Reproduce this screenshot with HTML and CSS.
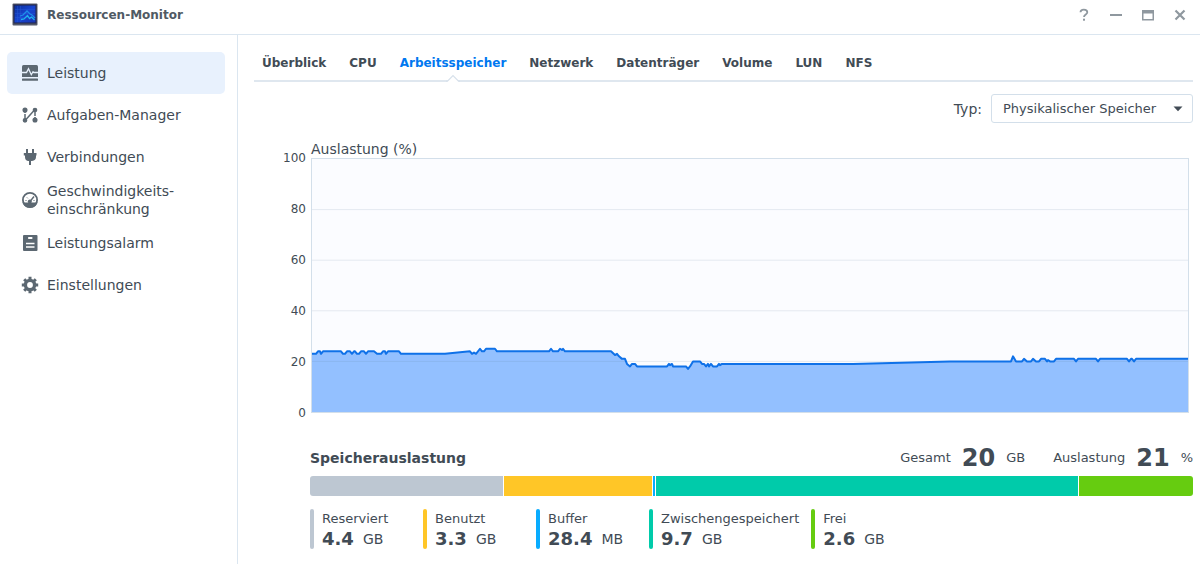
FILE: index.html
```html
<!DOCTYPE html>
<html lang="de">
<head>
<meta charset="utf-8">
<title>Ressourcen-Monitor</title>
<link rel="stylesheet" href="styles.css">
</head>
<body>
<div class="window">
  <header class="titlebar">
    <svg class="app-icon" viewBox="0 0 26 23" aria-hidden="true">
      <defs>
        <linearGradient id="screen" x1="0" y1="0" x2="1" y2="1">
          <stop offset="0" stop-color="#0b2f9c"/><stop offset="0.5" stop-color="#1745d0"/><stop offset="1" stop-color="#1a35b0"/>
        </linearGradient>
      </defs>
      <rect x="0.5" y="0.5" width="25" height="22" rx="1" fill="#54586a"/>
      <rect x="1.5" y="1.5" width="23" height="19" fill="#23264a"/>
      <rect x="2.5" y="2.5" width="21" height="17" fill="url(#screen)"/>
      <path d="M5.500 3v16M8.500 3v16M3 6.500h20M3 10.500h20M3 14.500h20" stroke="#2c62dc" stroke-width="0.500" opacity="0.700"/>
      <path d="M8 13l3-1 4-4 3 3 2 1 3 3" fill="none" stroke="#1f8de8" stroke-width="1.300"/>
      <path d="M9 16.500l3-.500 3.500-3.500 2 3 2-1.500 3 3" fill="none" stroke="#20b4ee" stroke-width="1.300"/>
    </svg>
    <h1 class="app-title">Ressourcen-Monitor</h1>
    <div class="window-controls">
      <button class="control" aria-label="Hilfe"><svg viewBox="0 0 14 14"><path d="M3.500 4.300C3.500 2.500 4.900 1.600 6.800 1.600s3.500 1 3.500 2.700c0 2.200-3.300 2.200-3.300 4.700" fill="none" stroke="#8f989f" stroke-width="1.800"/><rect x="6" y="10.700" width="2" height="2" fill="#8f989f"/></svg></button>
      <button class="control" aria-label="Minimieren"><svg viewBox="0 0 14 14"><rect x="1" y="6" width="12" height="2" fill="#8f989f"/></svg></button>
      <button class="control" aria-label="Maximieren"><svg viewBox="0 0 14 14"><path d="M1 2h12v10.500H1zM2.500 5.500v5.500h9v-5.500z" fill="#8f989f" fill-rule="evenodd"/></svg></button>
      <button class="control" aria-label="Schließen"><svg viewBox="0 0 14 14"><path d="M2.500 2.500l9 9M11.500 2.500l-9 9" stroke="#8f989f" stroke-width="2.200"/></svg></button>
    </div>
  </header>

  <div class="body">
    <nav class="sidebar" aria-label="Bereiche">
      <a class="nav-item nav-active" href="#leistung">
        <svg viewBox="0 0 18 18"><path d="M1 2.500Q1 1 2.500 1h13Q17 1 17 2.500V13H1z" fill="#5c6872"/><path d="M1 8.500h4.500l2-3.800 2.800 6 1.700-3 .8.800H17" fill="none" stroke="#e8f1fd" stroke-width="1.300"/><rect x="1" y="14.500" width="16" height="2.200" rx="0.500" fill="#5c6872"/></svg>
        <span>Leistung</span></a>
      <a class="nav-item" href="#aufgaben">
        <svg viewBox="0 0 18 18"><g fill="#5c6872" stroke="#5c6872" stroke-width="1.500"><path d="M4 4v10M14 4v10M4.500 14L13.500 4" fill="none"/><circle cx="4" cy="4" r="1.800"/><circle cx="4" cy="14.300" r="1.600"/><circle cx="14" cy="4" r="1.600"/><circle cx="14" cy="14" r="1.800"/></g><path d="M2 7.500h4M12 10.500h4" stroke="#fff"/></svg>
        <span>Aufgaben-Manager</span></a>
      <a class="nav-item" href="#verbindungen">
        <svg viewBox="0 0 18 18"><path d="M5 1h2v4h4V1h2v4h2.500v2.500H15V9q0 3.500-4 4h-1v4H8v-4H7q-3-.500-3-4V7.500H2.800V5H5z" fill="#5c6872"/></svg>
        <span>Verbindungen</span></a>
      <a class="nav-item" href="#geschwindigkeit">
        <svg viewBox="0 0 18 18"><circle cx="9" cy="9" r="7.100" fill="none" stroke="#5c6872" stroke-width="1.800"/><path d="M1.500 11.500h15A8 8 0 0 1 1.500 11.500z" fill="#5c6872"/><path d="M9 10.500l4-5" stroke="#5c6872" stroke-width="1.400"/><circle cx="8.800" cy="10.600" r="2" fill="#5c6872"/><path d="M4.500 9.500h1M6 6.500l.8.800M12.500 9.500h1" stroke="#5c6872"/></svg>
        <span>Geschwindigkeits-<br>einschränkung</span></a>
      <a class="nav-item" href="#alarm">
        <svg viewBox="0 0 18 18"><rect x="2" y="1" width="14.500" height="16" rx="1" fill="#5c6872"/><rect x="7" y="3" width="4.500" height="2" rx="0.800" fill="#fff"/><path d="M5 9.500h8.500M5 13h8.500" stroke="#fff" stroke-width="1.300"/></svg>
        <span>Leistungsalarm</span></a>
      <a class="nav-item" href="#einstellungen">
        <svg viewBox="0 0 18 18"><g fill="none" stroke="#5c6872"><circle cx="9" cy="9" r="4.600" stroke-width="3.400"/><path d="M9 .8v3M9 14.200v3M.8 9h3M14.200 9h3M3.200 3.200l2 2M12.800 12.800l2 2M3.200 14.800l2-2M12.800 5.200l2-2" stroke-width="3"/></g></svg>
        <span>Einstellungen</span></a>
    </nav>

    <main class="content">
      <nav class="tabs" aria-label="Leistung">
        <a class="tab" href="#ueberblick">Überblick</a>
        <a class="tab" href="#cpu">CPU</a>
        <a class="tab tab-active" href="#speicher" aria-current="page">Arbeitsspeicher<svg class="tab-notch" viewBox="0 0 14 8" aria-hidden="true"><path d="M1 8L7 1.500 13 8z" fill="#fff"/><path d="M0 7.200h1.500L7 1.500l5.500 5.700H14" fill="none" stroke="#d7e1eb" stroke-width="1.200"/></svg></a>
        <a class="tab" href="#netzwerk">Netzwerk</a>
        <a class="tab" href="#datentraeger">Datenträger</a>
        <a class="tab" href="#volume">Volume</a>
        <a class="tab" href="#lun">LUN</a>
        <a class="tab" href="#nfs">NFS</a>
      </nav>

      <div class="filter">
        <label for="typ">Typ:</label>
        <div class="select-wrap">
          <select id="typ" class="select"><option>Physikalischer Speicher</option></select>
          <svg class="select-arrow" viewBox="0 0 10 6" aria-hidden="true"><path d="M0.500 0.500h9L5 5.300z" fill="#414b55"/></svg>
        </div>
      </div>

      <section class="chart">
        <h2 class="chart-title">Auslastung (%)</h2>
        <div class="axis"><span>100</span><span>80</span><span>60</span><span>40</span><span>20</span><span>0</span></div>
        <svg class="plot" viewBox="312 0 876 100" preserveAspectRatio="none" role="img" aria-label="Auslastung (%)">
          <g transform="translate(0 100) scale(1 -1)">
            <polygon class="area" points="312,0 312,23 316,23 318,24 320,24 321,23 323,24 341,24 343,23 345,23 347,24 350,24 352,23 354,24 355,24 357,23 359,23 361,24 364,24 366,23 368,24 374,24 377,23 381,23 383,24 385,24 386,23 388,24 399,24 401,23 445,23 470,24 472,23 474,23.500 476,23 480,25 482,24 484,24 486,25 495,25 497,24 549,24 551,25 553,24 558,24 560,25 562,24.500 563,25 565,24 611,24 615,22.500 617,23 619,22 622,21 625,21 627,19 630,18 632,19 635,19 637,18 667,18 669,19 670,18.500 672,19 673,18 686,18 688,17 690,18 693,20 700,20 702,19 704,19 706,18 708,19 709,18 711,19 713,18 717,18 719,19 720,18.500 722,19 853,19 950,20 1011,20 1013,22 1016,20 1022,20 1024,21 1027,20 1031,20 1033,21 1036,20 1039,20 1041,21 1045,21 1047,20 1048,20.500 1050,20 1054,20 1056,21 1074,21 1076,20 1078,21 1096,21 1098,20 1100,21 1127,21 1129,20 1131,21 1132,21 1134,20 1136,21 1188,21 1188,0"/>
            <path class="gridline" d="M312 20H1188M312 40H1188M312 60H1188M312 80H1188"/>
            <polyline class="line" points="312,23 316,23 318,24 320,24 321,23 323,24 341,24 343,23 345,23 347,24 350,24 352,23 354,24 355,24 357,23 359,23 361,24 364,24 366,23 368,24 374,24 377,23 381,23 383,24 385,24 386,23 388,24 399,24 401,23 445,23 470,24 472,23 474,23.500 476,23 480,25 482,24 484,24 486,25 495,25 497,24 549,24 551,25 553,24 558,24 560,25 562,24.500 563,25 565,24 611,24 615,22.500 617,23 619,22 622,21 625,21 627,19 630,18 632,19 635,19 637,18 667,18 669,19 670,18.500 672,19 673,18 686,18 688,17 690,18 693,20 700,20 702,19 704,19 706,18 708,19 709,18 711,19 713,18 717,18 719,19 720,18.500 722,19 853,19 950,20 1011,20 1013,22 1016,20 1022,20 1024,21 1027,20 1031,20 1033,21 1036,20 1039,20 1041,21 1045,21 1047,20 1048,20.500 1050,20 1054,20 1056,21 1074,21 1076,20 1078,21 1096,21 1098,20 1100,21 1127,21 1129,20 1131,21 1132,21 1134,20 1136,21 1188,21"/>
          </g>
        </svg>
      </section>

      <section class="summary">
        <div class="summary-head">
          <h2 class="summary-title">Speicherauslastung</h2>
          <div class="total"><span>Gesamt</span><strong>20</strong><span>GB</span></div>
          <div class="total"><span>Auslastung</span><strong>21</strong><span>%</span></div>
        </div>
        <div class="stack">
          <div class="segment reserved" style="flex-grow:193"></div>
          <div class="segment used" style="flex-grow:148"></div>
          <div class="segment buffer" style="flex-grow:2"></div>
          <div class="segment cached" style="flex-grow:423"></div>
          <div class="segment free" style="flex-grow:114"></div>
        </div>
        <ul class="legend">
          <li class="legend-item"><i class="mark reserved"></i><div>Reserviert<p class="value"><strong>4.4</strong><span>GB</span></p></div></li>
          <li class="legend-item"><i class="mark used"></i><div>Benutzt<p class="value"><strong>3.3</strong><span>GB</span></p></div></li>
          <li class="legend-item"><i class="mark buffer"></i><div>Buffer<p class="value"><strong>28.4</strong><span>MB</span></p></div></li>
          <li class="legend-item"><i class="mark cached"></i><div>Zwischengespeichert<p class="value"><strong>9.7</strong><span>GB</span></p></div></li>
          <li class="legend-item"><i class="mark free"></i><div>Frei<p class="value"><strong>2.6</strong><span>GB</span></p></div></li>
        </ul>
      </section>
    </main>
  </div>
</div>
</body>
</html>
```

FILE: styles.css
```css
* { box-sizing: border-box; }
body {
  margin: 0;
  background: #fff;
  color: #414b55;
  font: 13px/18px Verdana, "DejaVu Sans", sans-serif;
}
h1, h2, p, ul { margin: 0; padding: 0; }
a { color: inherit; text-decoration: none; }

.window { display: flex; flex-direction: column; min-height: 100vh; }

.titlebar {
  display: flex;
  align-items: center;
  height: 35px;
  padding: 0 13px 5px 12px;
  border-bottom: 1px solid #dbe6f0;
}
.app-icon { width: 26px; height: 23px; margin-right: 9px; }
.app-title { color: #505a64; font-size: 12px; line-height: 18px; }
.window-controls { display: flex; gap: 18px; margin-left: auto; }
.control {
  width: 14px;
  height: 14px;
  padding: 0;
  border: 0;
  background: none;
}
.control svg { display: block; }

.body { display: flex; flex: 1; }
.sidebar {
  flex: none;
  width: 238px;
  padding: 17px 12px 0 7px;
  border-right: 1px solid #dbe6f0;
}
.nav-item {
  display: flex;
  align-items: center;
  gap: 8px;
  min-height: 42px;
  padding: 4px 14px;
  border-radius: 5px;
  font-size: 14px;
}
.nav-item svg { flex: none; width: 18px; height: 18px; }
.nav-active { background: #e8f1fd; }

.content { flex: 1; min-width: 0; padding: 0 7px 0 16px; }

.tabs {
  display: flex;
  gap: 23px;
  height: 47px;
  padding: 19px 8px 0;
  border-bottom: 2px solid #dfe7ef;
  font-size: 12px;
  font-weight: bold;
}
.tab { position: relative; }
.tab-active { color: #0078f0; }
.tab-notch {
  position: absolute;
  left: 50%;
  bottom: -2px;
  width: 14px;
  height: 8px;
  margin-left: -7px;
}

.filter {
  display: flex;
  justify-content: flex-end;
  align-items: center;
  gap: 9px;
  padding: 12px 0 0;
}
.filter label { font-size: 14px; }
.select-wrap { position: relative; }
.select {
  display: block;
  width: 202px;
  height: 29px;
  padding: 0 11px;
  border: 1px solid #d3dfea;
  border-radius: 3px;
  background: #fff;
  color: inherit;
  font: inherit;
  appearance: none;
}
.select-arrow { position: absolute; top: 12px; right: 10px; width: 10px; height: 6px; pointer-events: none; }

.chart {
  display: grid;
  grid-template-columns: 52px 1fr;
  column-gap: 5px;
  padding: 17px 4px 0 0;
}
.chart-title { grid-column: 2; font-size: 14px; font-weight: normal; line-height: 18px; }
.axis {
  display: flex;
  flex-direction: column;
  justify-content: space-between;
  margin: -8px 0;
  font-size: 12px;
  line-height: 16px;
  text-align: right;
}
.plot {
  display: block;
  width: 100%;
  height: 255px;
  border: 1px solid #d3dfea;
  background: #fbfcff;
}
.plot * { vector-effect: non-scaling-stroke; }
.area { fill: #93c0ff; }
.line { fill: none; stroke: #0f71e8; stroke-width: 2px; stroke-linejoin: round; }
.gridline { stroke: #5a7896; stroke-opacity: 0.14; stroke-width: 1px; }

.summary { padding: 31px 0 12px 56px; }
.summary-head { display: flex; align-items: center; height: 28px; margin-bottom: 4px; }
.summary-title { margin-right: auto; font-size: 14px; }
.total { display: flex; align-items: center; gap: 11px; margin-left: 28px; font-size: 13px; }
.total strong { font-size: 24px; }

.stack { display: flex; gap: 1px; height: 20px; overflow: hidden; border-radius: 3px; }
.segment { flex: 1 1 0; }
.reserved { background: #bdc7d2; }
.used { background: #ffc627; }
.buffer { background: #08acff; }
.cached { background: #00cbaa; }
.free { background: #66cc10; }

.legend { display: flex; gap: 12px; margin-top: 13px; list-style: none; }
.legend-item { display: flex; gap: 8px; min-width: 101px; line-height: 20px; }
.mark { width: 4px; height: 40px; border-radius: 2px; }
.value { display: flex; gap: 9px; font-size: 14px; }
.value strong { font-size: 18px; }
```
